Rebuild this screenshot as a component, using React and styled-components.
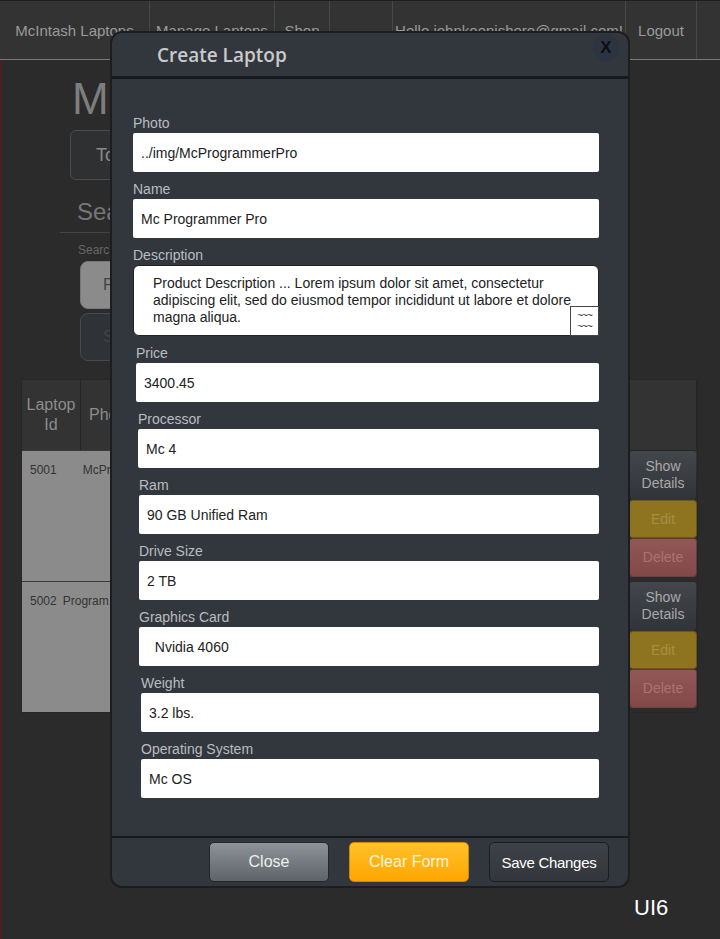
import React from 'react'
import styled, { createGlobalStyle } from 'styled-components'

const GlobalStyle = createGlobalStyle`
  html, body {
    margin: 0;
    padding: 0;
    background: #2b2b2b;
    font-family: "Liberation Sans", Arial, sans-serif;
  }
  * { box-sizing: border-box; }
`

const Page = styled.div`
  position: relative;
  width: 720px;
  height: 939px;
  overflow: hidden;
  background: #2b2b2b;
`

const NavBar = styled.nav`
  display: flex;
  height: 60px;
  background: #333333;
  border-bottom: 1px solid #7a7a7a;
  border-top: 1px solid #1e1e1e;
`

const NavItem = styled.div`
  display: flex;
  align-items: center;
  justify-content: center;
  width: ${p => p.w}px;
  border-right: 1px solid #474747;
  color: #9a9a9a;
  font-size: 15px;
  white-space: nowrap;
  overflow: hidden;
`

const Main = styled.main`
  height: 879px;
  border-left: 2px solid #4b1f24;
  padding: 14px 0 0 19px;
`

const PageTitle = styled.h1`
  margin: 0 0 6px 51px;
  font-size: 44px;
  font-weight: 400;
  color: #7e7e7e;
  line-height: 50px;
`

const ToggleButton = styled.div`
  width: 140px;
  height: 50px;
  margin-left: 49px;
  border: 1px solid #4c4c4c;
  border-radius: 6px;
  background: #2f3031;
  color: #8a8a8a;
  font-size: 18px;
  display: flex;
  align-items: center;
  padding-left: 25px;
`

const SearchTitle = styled.h2`
  margin: 18px 0 0 39px;
  padding: 0 0 6px 17px;
  width: 200px;
  font-size: 24px;
  font-weight: 400;
  color: #777;
  border-bottom: 1px solid #454545;
  line-height: 28px;
`

const SearchLabel = styled.div`
  margin: 10px 0 0 57px;
  font-size: 12px;
  color: #666;
`

const SearchButton = styled.div`
  width: 140px;
  height: 48px;
  margin: 4px 0 0 59px;
  border-radius: 8px;
  border: 1px solid ${p => p.light ? '#777' : '#464a4e'};
  background: ${p => p.light ? '#8b8b8b' : '#2f3236'};
  color: #444;
  font-size: 16px;
  display: flex;
  align-items: center;
  padding-left: 22px;
`

const Table = styled.div`
  margin-top: 18px;
  width: 677px;
  display: grid;
  grid-template-columns: 59px 1fr 68px;
  grid-template-rows: 70px 131px 131px;
  border: 1px solid #262626;
`

const HeadCell = styled.div`
  background: #333333;
  border-right: 1px solid #262626;
  color: #8c8c8c;
  font-size: 16px;
  line-height: 20px;
  display: flex;
  align-items: center;
  justify-content: ${p => p.center ? 'center' : 'flex-start'};
  text-align: center;
  padding-left: ${p => p.center ? 0 : 8}px;
`

const BodyCell = styled.div`
  grid-column: 1 / span 2;
  display: flex;
  gap: ${p => p.gap}px;
  background: #8b8b8b;
  border-top: 1px solid #3a3a3a;
  border-right: 1px solid #7a7a7a;
  color: #333;
  font-size: 12px;
  padding: 12px 0 0 8px;
  white-space: nowrap;
  overflow: hidden;
`

const ActionCell = styled.div`
  display: flex;
  flex-direction: column;
  background: #2b2b2b;
`

const ActionButton = styled.div`
  display: flex;
  align-items: center;
  justify-content: center;
  text-align: center;
  height: ${p => p.h}px;
  border-radius: 4px;
  font-size: 14px;
  line-height: 17px;
  color: ${p => p.fg};
  background: ${p => p.bg};
  border: 1px solid rgba(0, 0, 0, 0.25);
`

const Modal = styled.div`
  position: absolute;
  top: 31px;
  left: 110px;
  width: 520px;
  height: 857px;
  display: flex;
  flex-direction: column;
  background: #32373e;
  border: 2px solid #1c1d20;
  border-radius: 12px;
  overflow: hidden;
`

const ModalHeader = styled.div`
  position: relative;
  height: 46px;
  border-bottom: 3px solid #17191c;
  display: flex;
  align-items: center;
  padding-left: 45px;
`

const ModalTitle = styled.h3`
  margin: 0;
  font-family: "Open Sans", "Noto Sans", sans-serif;
  font-size: 19px;
  font-weight: 600;
  color: #c9cacc;
`

const CloseX = styled.div`
  position: absolute;
  top: 2px;
  right: 9px;
  width: 26px;
  height: 26px;
  border-radius: 50%;
  background: #2c3441;
  color: #0e0f10;
  font-size: 17px;
  font-weight: 700;
  display: flex;
  align-items: center;
  justify-content: center;
`

const ModalBody = styled.div`
  flex: 1;
  padding: 27px 29px 0 21px;
`

const Field = styled.div`
  display: flex;
  flex-direction: column;
  padding-left: ${p => p.shift || 0}px;
`

const Label = styled.label`
  font-size: 14px;
  line-height: 20px;
  margin-top: 7px;
  color: #b9bcc0;
`

const Input = styled.input`
  height: 39px;
  border: none;
  border-radius: 2px;
  background: #fff;
  padding: 0 8px;
  font-family: "Liberation Sans", Arial, sans-serif;
  font-size: 14px;
  color: #222;
  outline: none;
`

const AreaWrap = styled.div`
  position: relative;
  height: 71px;
`

const TextArea = styled.textarea`
  display: block;
  width: 100%;
  height: 71px;
  resize: none;
  border: 1px solid #222;
  border-radius: 6px;
  background: #fff;
  padding: 9px 4px 0 19px;
  font-family: "Liberation Sans", Arial, sans-serif;
  font-size: 14px;
  line-height: 17px;
  color: #222;
  outline: none;
  overflow: hidden;
`

const Grip = styled.span`
  position: absolute;
  right: 0;
  bottom: 0;
  width: 29px;
  height: 30px;
  border: 1px solid #444;
  background: #fff;
  font-size: 10px;
  line-height: 11px;
  color: #333;
  display: flex;
  flex-direction: column;
  align-items: center;
  justify-content: center;
  letter-spacing: -1px;
`

const ModalFooter = styled.div`
  height: 50px;
  border-top: 2px solid #17191c;
  display: flex;
  align-items: center;
  justify-content: flex-end;
  gap: 20px;
  padding-right: 19px;
`

const FooterButton = styled.div`
  width: 120px;
  height: 40px;
  border-radius: 5px;
  display: flex;
  align-items: center;
  justify-content: center;
  font-size: ${p => p.small ? 15 : 16}px;
  letter-spacing: ${p => p.small ? '-0.3px' : '0'};
  color: ${p => p.fg};
  background: ${p => p.bg};
  border: 1px solid ${p => p.border};
`

const Badge = styled.div`
  position: absolute;
  left: 634px;
  top: 895px;
  color: #fff;
  font-size: 22px;
`

const fields = [
  { label: 'Photo', value: '../img/McProgrammerPro', shift: 0 },
  { label: 'Name', value: 'Mc Programmer Pro', shift: 0 },
  { label: 'Description', area: true, value: 'Product Description ... Lorem ipsum dolor sit amet, consectetur adipiscing elit, sed do eiusmod tempor incididunt ut labore et dolore magna aliqua.', shift: 0 },
  { label: 'Price', value: '3400.45', shift: 3 },
  { label: 'Processor', value: 'Mc 4', shift: 5 },
  { label: 'Ram', value: '90 GB Unified Ram', shift: 6 },
  { label: 'Drive Size', value: '2 TB', shift: 6 },
  { label: 'Graphics Card', value: '  Nvidia 4060', shift: 6 },
  { label: 'Weight', value: '3.2 lbs.', shift: 8 },
  { label: 'Operating System', value: 'Mc OS', shift: 8 },
]

function Actions() {
  return (
    <ActionCell>
      <ActionButton h={50} bg="linear-gradient(#43474c, #313438)" fg="#a9a9a9">Show<br />Details</ActionButton>
      <ActionButton h={38} bg="#8f7420" fg="#a58f45">Edit</ActionButton>
      <ActionButton h={39} bg="linear-gradient(#915858, #834848)" fg="#a97373">Delete</ActionButton>
    </ActionCell>
  )
}

function App() {
  return (
    <Page>
      <GlobalStyle />
      <NavBar>
        <NavItem w={150}>McIntash Laptops</NavItem>
        <NavItem w={125}>Manage Laptops</NavItem>
        <NavItem w={55}>Shop</NavItem>
        <NavItem w={63}></NavItem>
        <NavItem w={233}>Hello johnkoenishero@gmail.com!</NavItem>
        <NavItem w={71}>Logout</NavItem>
      </NavBar>
      <Main>
        <PageTitle>Manage Laptops</PageTitle>
        <ToggleButton>Toggle Form</ToggleButton>
        <SearchTitle>Search Laptops</SearchTitle>
        <SearchLabel>Search by</SearchLabel>
        <SearchButton light>Photo</SearchButton>
        <SearchButton>Search</SearchButton>
        <Table>
          <HeadCell center>Laptop<br />Id</HeadCell>
          <HeadCell>Photo</HeadCell>
          <HeadCell />
          <BodyCell gap={26}><span>5001</span><span>McProgrammerPro</span></BodyCell>
          <Actions />
          <BodyCell gap={6}><span>5002</span><span>Program...</span></BodyCell>
          <Actions />
        </Table>
      </Main>

      <Modal>
        <ModalHeader>
          <ModalTitle>Create Laptop</ModalTitle>
          <CloseX>X</CloseX>
        </ModalHeader>
        <ModalBody>
          {fields.map(f => (
            <Field key={f.label} shift={f.shift}>
              <Label>{f.label}</Label>
              {f.area ? (
                <AreaWrap>
                  <TextArea readOnly value={f.value} />
                  <Grip><span>~~~</span><span>~~~</span></Grip>
                </AreaWrap>
              ) : (
                <Input readOnly value={f.value} />
              )}
            </Field>
          ))}
        </ModalBody>
        <ModalFooter>
          <FooterButton bg="linear-gradient(#8d9399, #5e6368)" fg="#eeeeee" border="#24272a">Close</FooterButton>
          <FooterButton bg="linear-gradient(#ffc12b, #ffa600)" fg="#fff4dc" border="#d08a00">Clear Form</FooterButton>
          <FooterButton small bg="linear-gradient(#3e4248, #33373c)" fg="#ffffff" border="#1b1d20">Save Changes</FooterButton>
        </ModalFooter>
      </Modal>
      <Badge>UI6</Badge>
    </Page>
  )
}

export default App
